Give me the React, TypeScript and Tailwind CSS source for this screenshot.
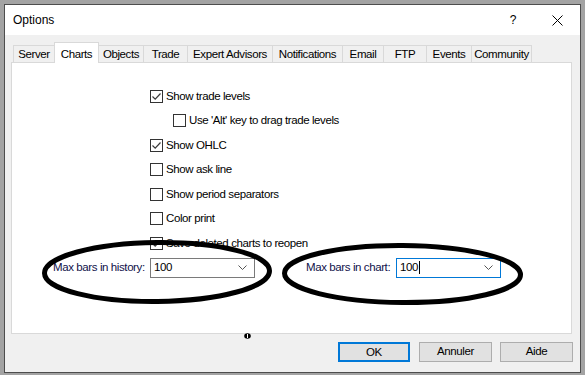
import type { ReactNode } from "react";

/* Options dialog — "Charts" tab, with two hand-drawn rings marking the
   max-bars fields. */

const FONT = { fontFamily: '"Liberation Sans", Arial, sans-serif' };

const tabs: { label: string; w: number }[] = [
  { label: "Server", w: 42 },
  { label: "Charts", w: 45 },
  { label: "Objects", w: 46 },
  { label: "Trade", w: 45 },
  { label: "Expert Advisors", w: 86 },
  { label: "Notifications", w: 71 },
  { label: "Email", w: 42 },
  { label: "FTP", w: 44 },
  { label: "Events", w: 46 },
  { label: "Community", w: 61 },
];

const options: { label: string; checked: boolean; indent?: boolean }[] = [
  { label: "Show trade levels", checked: true },
  { label: "Use 'Alt' key to drag trade levels", checked: false, indent: true },
  { label: "Show OHLC", checked: true },
  { label: "Show ask line", checked: false },
  { label: "Show period separators", checked: false },
  { label: "Color print", checked: false },
  { label: "Save deleted charts to reopen", checked: true },
];

export default function App() {
  return (
    <div
      className="relative h-[375px] w-[585px] overflow-hidden bg-[#a3a3a3] pb-[2px] pl-[4px] pr-[4px] pt-[4px] text-[11.5px] tracking-[-0.4px] text-black"
      style={FONT}
    >
      <div className="flex h-full flex-col border border-[#4d4d4d] bg-[#f0f0f0]">
        {/* title bar */}
        <div className="flex h-[30px] items-center bg-white pl-[8px]">
          <span className="text-[12px] tracking-normal">Options</span>
          <span className="ml-auto mr-[36px] text-[12px]">?</span>
          <svg width="11" height="11" viewBox="0 0 11 11" className="mr-[17px]">
            <path d="M0.5 0.5 L10.5 10.5 M10.5 0.5 L0.5 10.5" stroke="#000" strokeWidth="1" />
          </svg>
        </div>

        {/* tab strip */}
        <div className="ml-[8px] mt-[7px] flex h-[20px] items-end">
          {tabs.map((t, i) =>
            t.label === "Charts" ? (
              <div
                key={t.label}
                className="relative z-10 -mb-px -ml-px flex h-[21px] items-start justify-center border border-b-0 border-[#d9d9d9] bg-white pt-[3px]"
                style={{ width: t.w }}
              >
                {t.label}
              </div>
            ) : (
              <div
                key={t.label}
                className={`flex h-[17px] items-center justify-center border border-b-0 border-[#d9d9d9] bg-[#f0f0f0] pt-px ${i > 0 ? "-ml-px" : ""}`}
                style={{ width: t.w }}
              >
                {t.label}
              </div>
            ),
          )}
        </div>

        {/* page */}
        <div className="ml-[6px] mr-[8px] flex h-[272px] flex-col border border-[#d9d9d9] bg-white">
          <div className="flex flex-col pl-[138px] pt-[21px]">
            {options.map((o) => (
              <CheckRow key={o.label} checked={o.checked} indent={o.indent}>
                {o.label}
              </CheckRow>
            ))}
          </div>

          <div className="mt-[2px] flex items-center pl-[41px]">
            <span className="w-[97px] shrink-0 text-[#10104a]">Max bars in history:</span>
            <Combo value="100" />
            <span className="ml-[51px] w-[90px] shrink-0 text-[#10104a]">Max bars in chart:</span>
            <Combo value="100" focused />
          </div>
        </div>

        {/* buttons */}
        <div className="mr-[7px] mt-[8px] flex justify-end gap-[9px]">
          <button className="h-[20px] w-[72px] border-2 border-[#0078d7] bg-[#e1e1e1]">OK</button>
          <button className="h-[20px] w-[73px] border border-[#adadad] bg-[#e1e1e1]">Annuler</button>
          <button className="-ml-px h-[20px] w-[73px] border border-[#adadad] bg-[#e1e1e1]">Aide</button>
        </div>
      </div>

      {/* hand-drawn rings + mouse cursor */}
      <svg className="pointer-events-none absolute inset-0" width="585" height="375">
        <ellipse cx="157" cy="272" rx="112.5" ry="29.5" fill="none" stroke="#000" strokeWidth="5" transform="rotate(-0.6 157 272)" />
        <ellipse cx="402.5" cy="274" rx="118" ry="28.5" fill="none" stroke="#000" strokeWidth="5" transform="rotate(0.4 402 274)" />
        <ellipse cx="247.5" cy="336" rx="3.3" ry="2.8" fill="#000" />
        <path d="M247.5 334 V338" stroke="#fff" strokeWidth="1" />
      </svg>
    </div>
  );
}

function CheckRow({ checked, indent, children }: { checked: boolean; indent?: boolean; children: ReactNode }) {
  return (
    <div className={`flex h-[24.5px] items-center ${indent ? "pl-[23px]" : ""}`}>
      <span className="flex h-[13px] w-[13px] shrink-0 items-center justify-center border border-[#333333] bg-white">
        {checked && (
          <svg width="11" height="11" viewBox="0 0 11 11">
            <path d="M1.5 5.5 L4.2 8.2 L9.5 2.5" fill="none" stroke="#3a3a3a" strokeWidth="1.2" />
          </svg>
        )}
      </span>
      <span className="ml-[3px]">{children}</span>
    </div>
  );
}

function Combo({ value, focused }: { value: string; focused?: boolean }) {
  return (
    <div
      className={`flex h-[20px] w-[105px] shrink-0 items-center border bg-white pl-[3px] pr-[7px] ${
        focused ? "border-[#0078d7]" : "border-[#7a7a7a]"
      }`}
    >
      <span>{value}</span>
      {focused && <span className="ml-px h-[13px] w-px bg-black" />}
      <svg width="9" height="5" viewBox="0 0 9 5" className="ml-auto">
        <path d="M0.5 0.5 L4.5 4.5 L8.5 0.5" fill="none" stroke="#555" strokeWidth="1" />
      </svg>
    </div>
  );
}
